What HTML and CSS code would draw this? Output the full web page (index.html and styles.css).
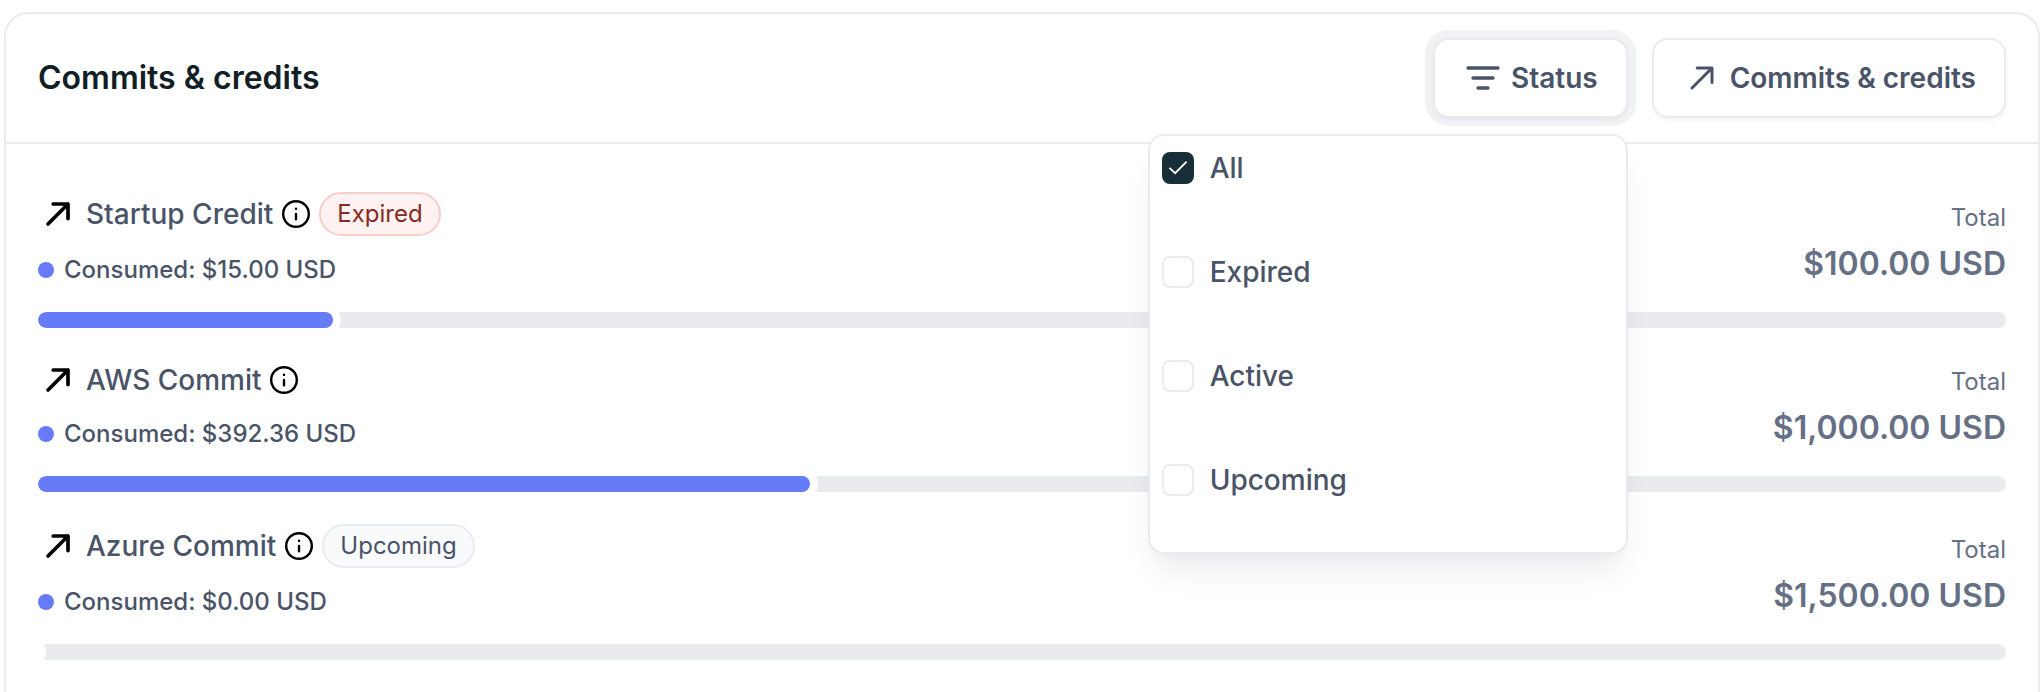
FILE: index.html
```html
<!DOCTYPE html>
<html lang="en">
<head>
<meta charset="utf-8">
<title>Commits &amp; credits</title>
<link rel="stylesheet" href="styles.css">
</head>
<body>
<svg class="sprite" aria-hidden="true">
  <symbol id="arrow" viewBox="0 0 40 40"><path d="M10 30 30 10M15.2 10H30v14.6"/></symbol>
  <symbol id="filter" viewBox="0 0 20 20"><path d="M2.5 5h15M5 10h10M7.5 15h5"/></symbol>
  <symbol id="info" viewBox="0 0 32 32"><circle cx="16" cy="16" r="12.8"/><path d="M16 16v5.2M16 10.8v.1"/></symbol>
  <symbol id="check" viewBox="0 0 32 32"><path d="m7.5 15.8 5.6 5.4L24.6 9.6"/></symbol>
</svg>
<main class="card">
  <header class="card-header">
    <h1 class="card-title">Commits &amp; credits</h1>
    <div class="actions">
      <div class="dropdown">
        <button class="button button-focused"><svg class="icon filter-icon"><use href="#filter"/></svg>Status</button>
        <div class="menu">
          <label class="option"><span class="checkbox checkbox-on"><svg class="check-icon"><use href="#check"/></svg></span>All</label>
          <label class="option"><span class="checkbox"></span>Expired</label>
          <label class="option"><span class="checkbox"></span>Active</label>
          <label class="option"><span class="checkbox"></span>Upcoming</label>
        </div>
      </div>
      <button class="button"><svg class="icon"><use href="#arrow"/></svg>Commits &amp; credits</button>
    </div>
  </header>
  <section class="commits">
    <article class="commit">
      <div class="summary">
        <div class="details">
          <div class="name"><svg class="icon link-icon"><use href="#arrow"/></svg><span class="label">Startup Credit</span><svg class="info-icon"><use href="#info"/></svg><span class="badge badge-expired">Expired</span></div>
          <div class="consumed"><span class="dot"></span>Consumed: $15.00 USD</div>
        </div>
        <div class="total"><span class="total-label">Total</span><span class="amount">$100.00 USD</span></div>
      </div>
      <div class="track"><div class="spent" style="width:calc(15% + 8px)"><div class="fill"></div></div></div>
    </article>
    <article class="commit">
      <div class="summary">
        <div class="details">
          <div class="name"><svg class="icon link-icon"><use href="#arrow"/></svg><span class="label">AWS Commit</span><svg class="info-icon"><use href="#info"/></svg></div>
          <div class="consumed"><span class="dot"></span>Consumed: $392.36 USD</div>
        </div>
        <div class="total"><span class="total-label">Total</span><span class="amount">$1,000.00 USD</span></div>
      </div>
      <div class="track"><div class="spent" style="width:calc(39.236% + 8px)"><div class="fill"></div></div></div>
    </article>
    <article class="commit">
      <div class="summary">
        <div class="details">
          <div class="name"><svg class="icon link-icon"><use href="#arrow"/></svg><span class="label">Azure Commit</span><svg class="info-icon"><use href="#info"/></svg><span class="badge">Upcoming</span></div>
          <div class="consumed"><span class="dot"></span>Consumed: $0.00 USD</div>
        </div>
        <div class="total"><span class="total-label">Total</span><span class="amount">$1,500.00 USD</span></div>
      </div>
      <div class="track"><div class="spent" style="width:calc(0% + 8px)"><div class="fill"></div></div></div>
    </article>
  </section>
</main>
</body>
</html>
```
FILE: styles.css
```css
* { box-sizing: border-box; }
body {
  margin: 0;
  padding: 12px 4px 0;
  height: 692px;
  background: #fff;
  color: #475467;
  font-family: Inter, "Liberation Sans", sans-serif;
  font-optical-sizing: none;
}
.sprite { display: none; }
.card {
  height: 680px;
  border: 2px solid #eaebf0;
  border-bottom: 0;
  border-radius: 24px 24px 0 0;
}
.card-header {
  display: flex;
  align-items: center;
  justify-content: space-between;
  height: 130px;
  padding: 0 32px;
  border-bottom: 2px solid #eaebf0;
}
.card-title {
  margin: 0;
  color: #112026;
  font-size: 32px;
  font-weight: 600;
  line-height: 48px;
}
.actions { display: flex; gap: 24px; }
.dropdown { position: relative; }
.button {
  display: flex;
  align-items: center;
  gap: 8px;
  height: 80px;
  padding: 0 28px;
  border: 2px solid #eaebf0;
  border-radius: 16px;
  background: #fff;
  box-shadow: 0 2px 4px rgba(16, 24, 40, .05);
  color: #4a5468;
  font-family: inherit;
  font-size: 28px;
  font-weight: 600;
  line-height: 40px;
  white-space: nowrap;
}
.button-focused { box-shadow: 0 2px 4px rgba(16, 24, 40, .05), 0 0 0 8px #f1f2f4; }
.icon {
  width: 40px;
  height: 40px;
  fill: none;
  stroke: currentColor;
  stroke-width: 3;
  stroke-linecap: round;
  stroke-linejoin: round;
}
.filter-icon { stroke-width: 1.67; }
.menu {
  position: absolute;
  z-index: 1;
  top: 96px;
  right: 0;
  display: grid;
  gap: 72px;
  align-content: start;
  width: 480px;
  height: 420px;
  padding: 16px 12px;
  border: 2px solid #eaebf0;
  border-radius: 16px;
  background: #fff;
  box-shadow: 0 24px 32px -8px rgba(16, 24, 40, .08), 0 8px 12px -4px rgba(16, 24, 40, .03);
}
.option {
  display: flex;
  align-items: center;
  gap: 16px;
  height: 32px;
  color: #4a5468;
  font-size: 28px;
  font-weight: 500;
  line-height: 32px;
}
.checkbox {
  width: 32px;
  height: 32px;
  border: 2px solid #eaebf0;
  border-radius: 8px;
}
.checkbox-on { border: 0; background: #192f38; }
.check-icon {
  display: block;
  width: 32px;
  height: 32px;
  fill: none;
  stroke: #fff;
  stroke-width: 1.8;
}
.commits {
  display: flex;
  flex-direction: column;
  gap: 32px;
  padding: 48px 32px 0;
}
.commit { display: flex; flex-direction: column; gap: 24px; }
.summary { display: flex; align-items: flex-end; justify-content: space-between; }
.details { display: flex; flex-direction: column; gap: 16px; color: #4a5468; }
.name { display: flex; align-items: center; min-height: 40px; }
.link-icon { color: #000; stroke-width: 3.7; }
.label {
  margin: 0 7px 0 8px;
  font-size: 28px;
  font-weight: 500;
  line-height: 40px;
}
.info-icon {
  width: 32px;
  height: 32px;
  fill: none;
  stroke: #000;
  stroke-width: 2.4;
  stroke-linecap: round;
}
.badge {
  height: 44px;
  margin-left: 7px;
  padding: 0 16px;
  border: 2px solid #eaebf0;
  border-radius: 22px;
  background: #f9fafc;
  font-size: 24px;
  line-height: 40px;
}
.badge-expired { border-color: #f8ceca; background: #fdf2f1; color: #862a22; }
.consumed {
  display: flex;
  align-items: center;
  gap: 10px;
  font-size: 24px;
  font-weight: 500;
  line-height: 36px;
}
.dot { width: 16px; height: 16px; border-radius: 50%; background: #667bf7; }
.total { display: flex; flex-direction: column; gap: 4px; color: #667085; text-align: right; }
.total-label { font-size: 24px; line-height: 36px; }
.amount { font-size: 32px; font-weight: 600; line-height: 48px; }
.track {
  height: 16px;
  overflow: hidden;
  border-radius: 8px;
  background: #eaebef;
}
.spent {
  height: 16px;
  padding-right: 8px;
  border-radius: 0 4px 4px 0 / 0 8px 8px 0;
  background: #fff;
}
.fill { height: 16px; border-radius: 8px; background: #667bf7; }
```
